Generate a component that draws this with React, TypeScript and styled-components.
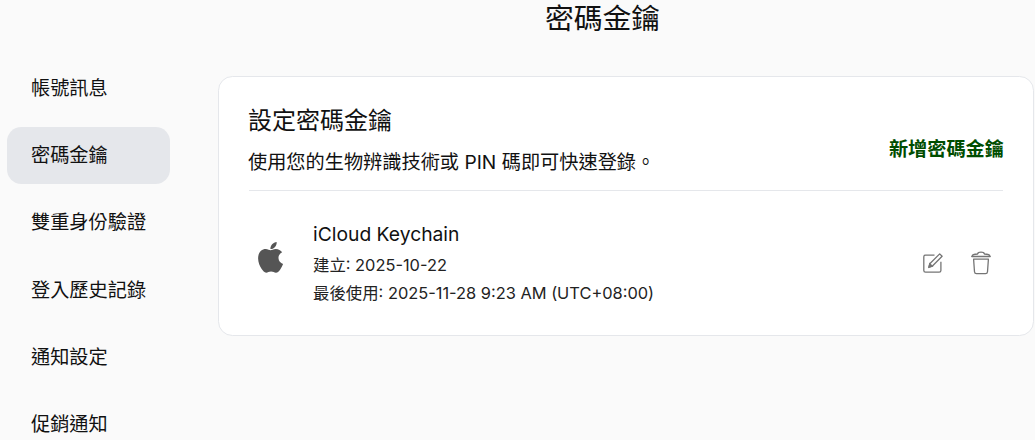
import React from "react";
import styled, { createGlobalStyle } from "styled-components";

const GlobalStyle = createGlobalStyle`
  html, body {
    margin: 0;
    padding: 0;
    height: 440px;
    overflow: hidden;
    background: #fafafa;
  }
  body {
    font-family: Inter, "Noto Sans CJK TC", sans-serif;
    color: #111;
  }
`;

const Page = styled.div`
  width: 1035px;
  height: 440px;
  overflow: hidden;
`;

const Title = styled.h1`
  margin: 0;
  height: 76px;
  padding: 0 0 0 170px;
  text-align: center;
  font-size: 28.8px;
  line-height: 38px;
  font-weight: 400;
`;

const Body = styled.div`
  display: flex;
  align-items: flex-start;
`;

const Sidebar = styled.nav`
  width: 163px;
  margin-left: 7px;
  margin-right: 48px;
  display: flex;
  flex-direction: column;
  gap: 10px;
  flex-shrink: 0;
  margin-top: -16px;
`;

const NavItem = styled.div<{ $active?: boolean }>`
  height: 57.2px;
  line-height: 57.6px;
  padding-left: 24px;
  font-size: 19.2px;
  border-radius: 14.4px;
  background: ${(p) => (p.$active ? "#e5e7eb" : "transparent")};
`;

const Card = styled.section`
  box-sizing: border-box;
  width: 816px;
  height: 260px;
  padding: 0 30px;
  background: #fff;
  border: 1px solid #e5e7eb;
  border-radius: 14.4px;
`;

const CardHeader = styled.header`
  height: 114px;
  box-sizing: border-box;
  border-bottom: 1px solid #e5e7eb;
  display: flex;
  align-items: flex-end;
  justify-content: space-between;
  padding-bottom: 14px;
`;

const CardHeading = styled.div`
  margin-left: -1px;
`;

const CardTitle = styled.h2`
  margin: 0 0 9px;
  font-size: 24px;
  line-height: 36px;
  font-weight: 400;
`;

const CardHint = styled.p`
  margin: 0;
  font-size: 19.2px;
  line-height: 28px;
`;

const AddButton = styled.button`
  border: none;
  background: none;
  padding: 0;
  margin: 0 -1px 13px 0;
  font: inherit;
  font-size: 19.2px;
  font-weight: 700;
  line-height: 28px;
  color: #004d00;
`;

const KeyRow = styled.div`
  display: flex;
  align-items: center;
  padding-top: 26px;
`;

const AppleBox = styled.div`
  width: 64px;
  display: flex;
  color: #555;
  margin-bottom: 8px;
  svg {
    margin-left: 8px;
  }
`;

const KeyInfo = styled.div`
  flex: 1;
`;

const KeyName = styled.div`
  font-size: 19.3px;
  line-height: 34px;
`;

const KeyMeta = styled.div`
  font-size: 16.4px;
  line-height: 28px;
  color: #222;
`;

const Actions = styled.div`
  display: flex;
  gap: 28px;
  align-items: center;
  margin: 2px 12px 0 0;
  color: #757575;
`;

const AppleIcon = () => (
  <svg width="27" height="34" viewBox="0 0 29 37" fill="currentColor">
    <path d="M21.2 1c.2 2.300-.6 4-1.800 5.500-1.200 1.400-2.900 2.500-5 2.300-.2-2 .7-3.900 1.900-5.200C17.500 2.200 19.400 1.200 21.200 1z" />
    <path d="M14.600 10.100c1.100 0 3-1.400 5.700-1.400 2.900 0 5.400 1.400 6.900 3.600-3 1.800-4.200 3.900-4 6.600.2 3 2 5 5 6.200-.8 2.200-1.800 4.100-3.100 5.900-1.300 1.800-2.700 3.500-4.700 3.500-1.900 0-2.800-1.200-5.300-1.200s-3.500 1.200-5.300 1.200c-2 0-3.500-1.900-4.900-3.900C2.900 27.600 1 22.900 1 18.700c0-6.200 4-10 8.300-10 2.300 0 4 1.400 5.300 1.400z" />
  </svg>
);

const EditIcon = () => (
  <svg width="20" height="20" viewBox="0 0 20 20" fill="none" stroke="currentColor" strokeWidth="1.3">
    <path d="M11.500 2.200H2.500C1.500 2.200.8 2.900.8 3.800v13.700c0 .9.700 1.700 1.700 1.700h13.700c.9 0 1.700-.8 1.700-1.700V8.800" />
    <path d="M16.700.9l2.400 2.400L9.200 13.200l-3.300 1 .9-3.400z" strokeLinejoin="round" />
    <path d="M5.900 14.200l.9-3.400 2.400 2.400z" fill="currentColor" />
  </svg>
);

const TrashIcon = () => (
  <svg width="20" height="24" viewBox="0 0 20 24" fill="none" stroke="currentColor" strokeWidth="1.3">
    <path d="M.8 5.500h18.400" strokeLinecap="round" />
    <path d="M1 5.500C1 3.800 3 3.200 6.500 3c.3-1.200 1-1.900 3.500-1.900s3.200.7 3.500 1.900c3.500.2 5.500.8 5.500 2.500" />
    <path d="M2.600 8.200l.9 12.500c.1 1.300.9 2 2 2h9c1.100 0 1.900-.7 2-2l.9-12.500z" strokeLinejoin="round" />
  </svg>
);

const navItems = ["帳號訊息", "密碼金鑰", "雙重身份驗證", "登入歷史記錄", "通知設定", "促銷通知"];

export default function App() {
  return (
    <Page>
      <GlobalStyle />
      <Title>密碼金鑰</Title>
      <Body>
        <Sidebar>
          {navItems.map((name) => (
            <NavItem key={name} $active={name === "密碼金鑰"}>
              {name}
            </NavItem>
          ))}
        </Sidebar>
        <Card>
          <CardHeader>
            <CardHeading>
              <CardTitle>設定密碼金鑰</CardTitle>
              <CardHint>使用您的生物辨識技術或 PIN 碼即可快速登錄。</CardHint>
            </CardHeading>
            <AddButton>新增密碼金鑰</AddButton>
          </CardHeader>
          <KeyRow>
            <AppleBox>
              <AppleIcon />
            </AppleBox>
            <KeyInfo>
              <KeyName>iCloud Keychain</KeyName>
              <KeyMeta>建立: 2025-10-22</KeyMeta>
              <KeyMeta>最後使用: 2025-11-28 9:23 AM (UTC+08:00)</KeyMeta>
            </KeyInfo>
            <Actions>
              <EditIcon />
              <TrashIcon />
            </Actions>
          </KeyRow>
        </Card>
      </Body>
    </Page>
  );
}
